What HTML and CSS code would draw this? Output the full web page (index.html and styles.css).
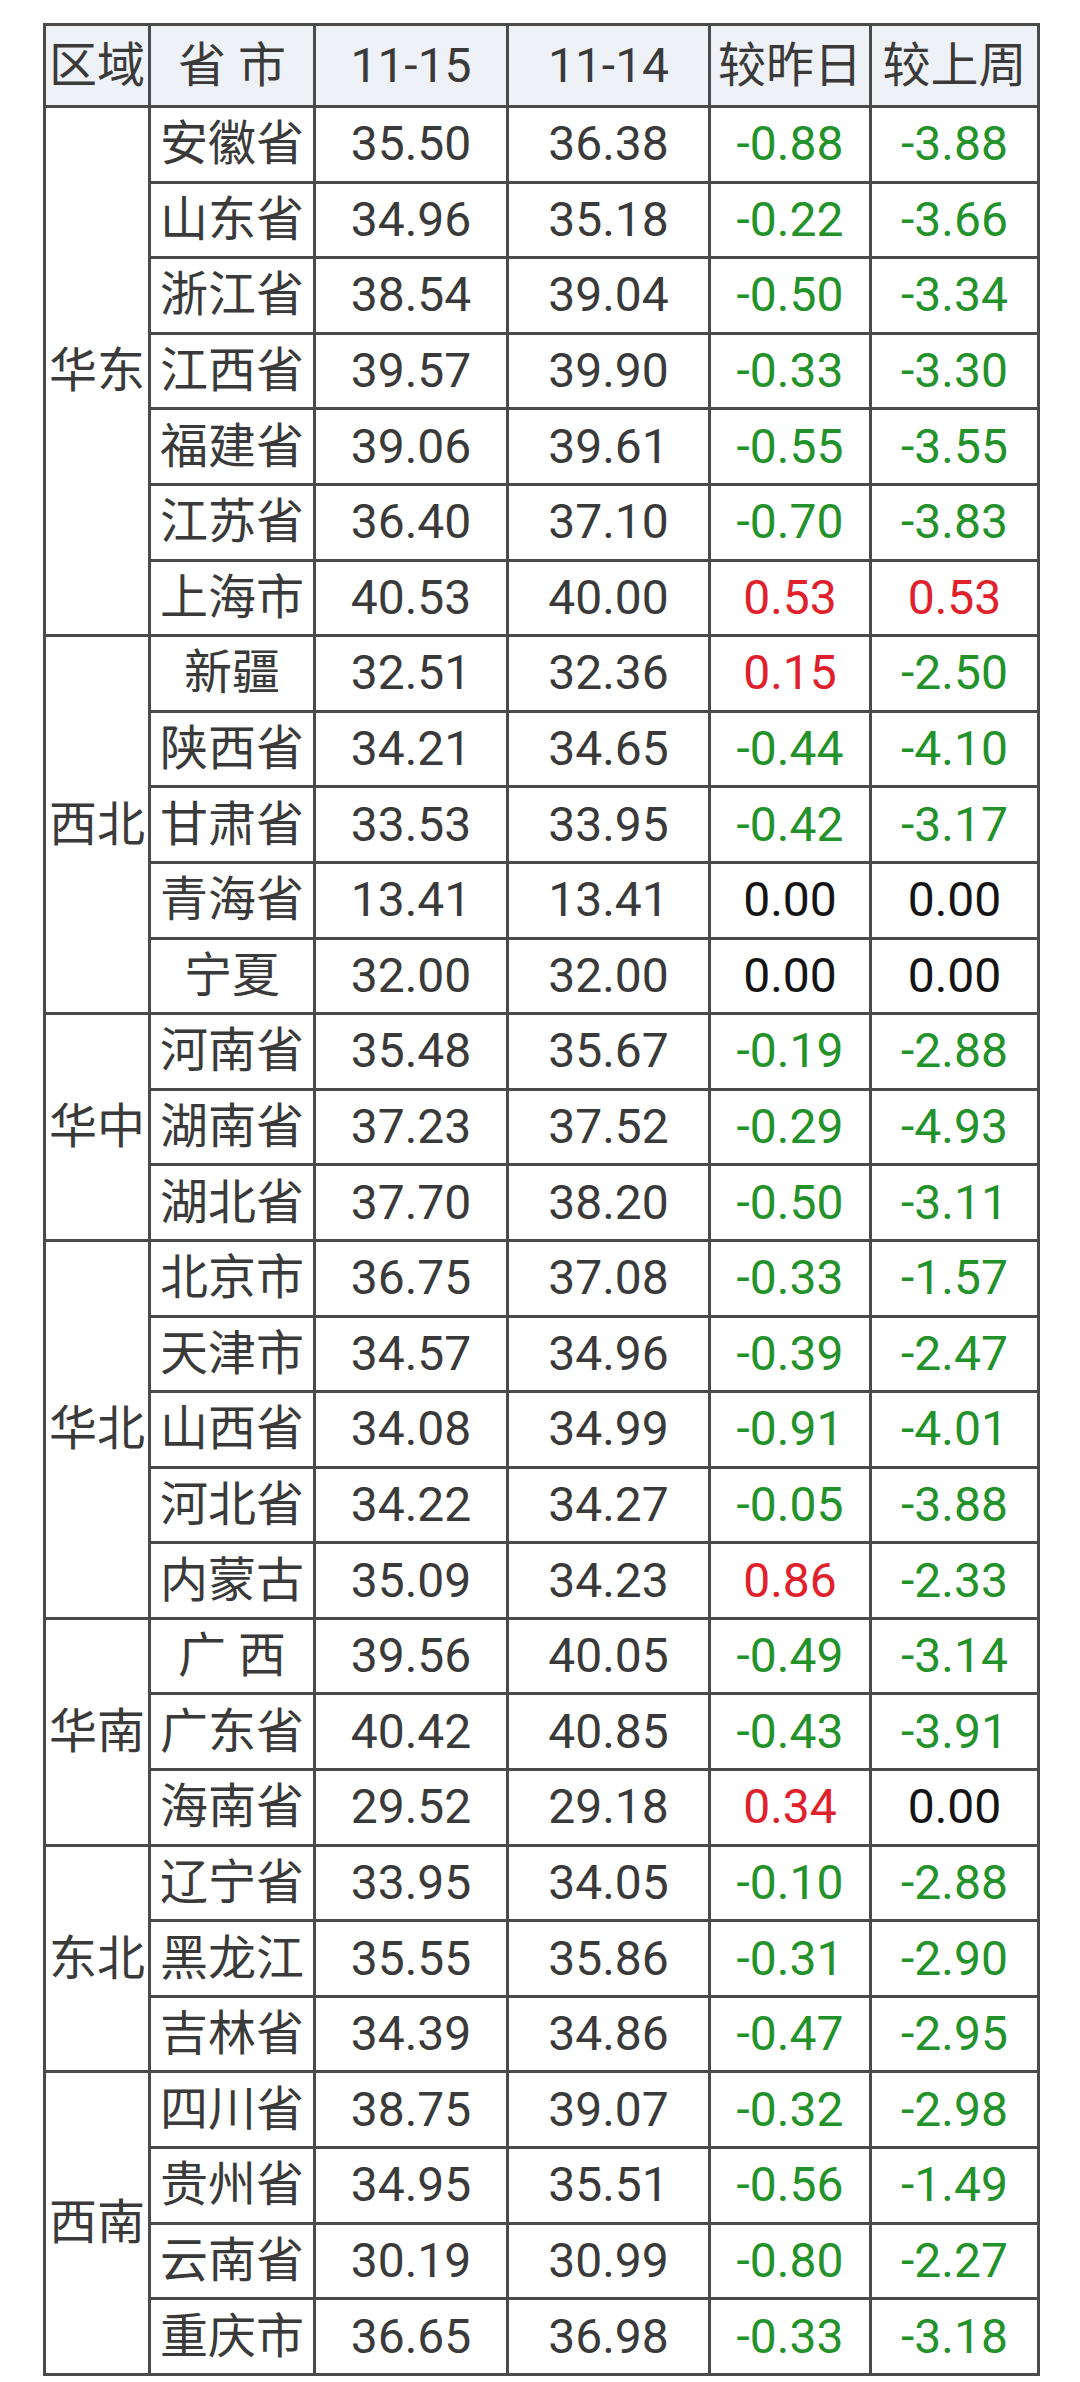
FILE: index.html
```html
<!DOCTYPE html>
<html lang="zh-CN">
<head>
<meta charset="utf-8">
<title>区域价格表</title>
<link rel="stylesheet" href="styles.css">
</head>
<body>
<table class="price">
  <colgroup>
    <col class="c-region"><col class="c-prov"><col class="c-d1"><col class="c-d2"><col class="c-chg1"><col class="c-chg2">
  </colgroup>
  <thead>
    <tr><th>区域</th><th>省 市</th><th>11-15</th><th>11-14</th><th>较昨日</th><th>较上周</th></tr>
  </thead>
  <tbody>
    <tr><td class="region" rowspan="7">华东</td><td>安徽省</td><td>35.50</td><td>36.38</td><td class="dn">-0.88</td><td class="dn">-3.88</td></tr>
    <tr><td>山东省</td><td>34.96</td><td>35.18</td><td class="dn">-0.22</td><td class="dn">-3.66</td></tr>
    <tr><td>浙江省</td><td>38.54</td><td>39.04</td><td class="dn">-0.50</td><td class="dn">-3.34</td></tr>
    <tr><td>江西省</td><td>39.57</td><td>39.90</td><td class="dn">-0.33</td><td class="dn">-3.30</td></tr>
    <tr><td>福建省</td><td>39.06</td><td>39.61</td><td class="dn">-0.55</td><td class="dn">-3.55</td></tr>
    <tr><td>江苏省</td><td>36.40</td><td>37.10</td><td class="dn">-0.70</td><td class="dn">-3.83</td></tr>
    <tr><td>上海市</td><td>40.53</td><td>40.00</td><td class="up">0.53</td><td class="up">0.53</td></tr>

    <tr><td class="region" rowspan="5">西北</td><td>新疆</td><td>32.51</td><td>32.36</td><td class="up">0.15</td><td class="dn">-2.50</td></tr>
    <tr><td>陕西省</td><td>34.21</td><td>34.65</td><td class="dn">-0.44</td><td class="dn">-4.10</td></tr>
    <tr><td>甘肃省</td><td>33.53</td><td>33.95</td><td class="dn">-0.42</td><td class="dn">-3.17</td></tr>
    <tr><td>青海省</td><td>13.41</td><td>13.41</td><td class="flat">0.00</td><td class="flat">0.00</td></tr>
    <tr><td>宁夏</td><td>32.00</td><td>32.00</td><td class="flat">0.00</td><td class="flat">0.00</td></tr>

    <tr><td class="region" rowspan="3">华中</td><td>河南省</td><td>35.48</td><td>35.67</td><td class="dn">-0.19</td><td class="dn">-2.88</td></tr>
    <tr><td>湖南省</td><td>37.23</td><td>37.52</td><td class="dn">-0.29</td><td class="dn">-4.93</td></tr>
    <tr><td>湖北省</td><td>37.70</td><td>38.20</td><td class="dn">-0.50</td><td class="dn">-3.11</td></tr>

    <tr><td class="region" rowspan="5">华北</td><td>北京市</td><td>36.75</td><td>37.08</td><td class="dn">-0.33</td><td class="dn">-1.57</td></tr>
    <tr><td>天津市</td><td>34.57</td><td>34.96</td><td class="dn">-0.39</td><td class="dn">-2.47</td></tr>
    <tr><td>山西省</td><td>34.08</td><td>34.99</td><td class="dn">-0.91</td><td class="dn">-4.01</td></tr>
    <tr><td>河北省</td><td>34.22</td><td>34.27</td><td class="dn">-0.05</td><td class="dn">-3.88</td></tr>
    <tr><td>内蒙古</td><td>35.09</td><td>34.23</td><td class="up">0.86</td><td class="dn">-2.33</td></tr>

    <tr><td class="region" rowspan="3">华南</td><td>广 西</td><td>39.56</td><td>40.05</td><td class="dn">-0.49</td><td class="dn">-3.14</td></tr>
    <tr><td>广东省</td><td>40.42</td><td>40.85</td><td class="dn">-0.43</td><td class="dn">-3.91</td></tr>
    <tr><td>海南省</td><td>29.52</td><td>29.18</td><td class="up">0.34</td><td class="flat">0.00</td></tr>

    <tr><td class="region" rowspan="3">东北</td><td>辽宁省</td><td>33.95</td><td>34.05</td><td class="dn">-0.10</td><td class="dn">-2.88</td></tr>
    <tr><td>黑龙江</td><td>35.55</td><td>35.86</td><td class="dn">-0.31</td><td class="dn">-2.90</td></tr>
    <tr><td>吉林省</td><td>34.39</td><td>34.86</td><td class="dn">-0.47</td><td class="dn">-2.95</td></tr>

    <tr><td class="region" rowspan="4">西南</td><td>四川省</td><td>38.75</td><td>39.07</td><td class="dn">-0.32</td><td class="dn">-2.98</td></tr>
    <tr><td>贵州省</td><td>34.95</td><td>35.51</td><td class="dn">-0.56</td><td class="dn">-1.49</td></tr>
    <tr><td>云南省</td><td>30.19</td><td>30.99</td><td class="dn">-0.80</td><td class="dn">-2.27</td></tr>
    <tr><td>重庆市</td><td>36.65</td><td>36.98</td><td class="dn">-0.33</td><td class="dn">-3.18</td></tr>
  </tbody>
</table>
</body>
</html>
```

FILE: styles.css
```css
html, body {
  margin: 0;
  padding: 0;
  background: #ffffff;
}

body {
  padding: 23px 0 0 43px;
  font-family: Roboto, "Noto Sans CJK SC", "Noto Sans", sans-serif;
  color: #3a3a3a;
}

.price {
  border-collapse: collapse;
  table-layout: fixed;
  width: 994px;
  font-size: 48px;
  line-height: 1;
}

.c-region { width: 105px; }
.c-prov   { width: 165px; }
.c-d1     { width: 193px; }
.c-d2     { width: 202px; }
.c-chg1   { width: 161px; }
.c-chg2   { width: 168px; }

.price th,
.price td {
  border: 3px solid #4a4a4a;
  padding: 0;
  text-align: center;
  vertical-align: middle;
  white-space: nowrap;
  font-weight: 400;
}

.price thead tr {
  height: 82px;
}

.price th {
  background: #eef1f5;
  color: #3a3a3a;
}

.price tbody tr {
  height: 75.6px;
}

.price .region {
  color: #3a3a3a;
}

.price .dn {
  color: #24922a;
}

.price .up {
  color: #e0212b;
}

.price .flat {
  color: #141414;
}
```
